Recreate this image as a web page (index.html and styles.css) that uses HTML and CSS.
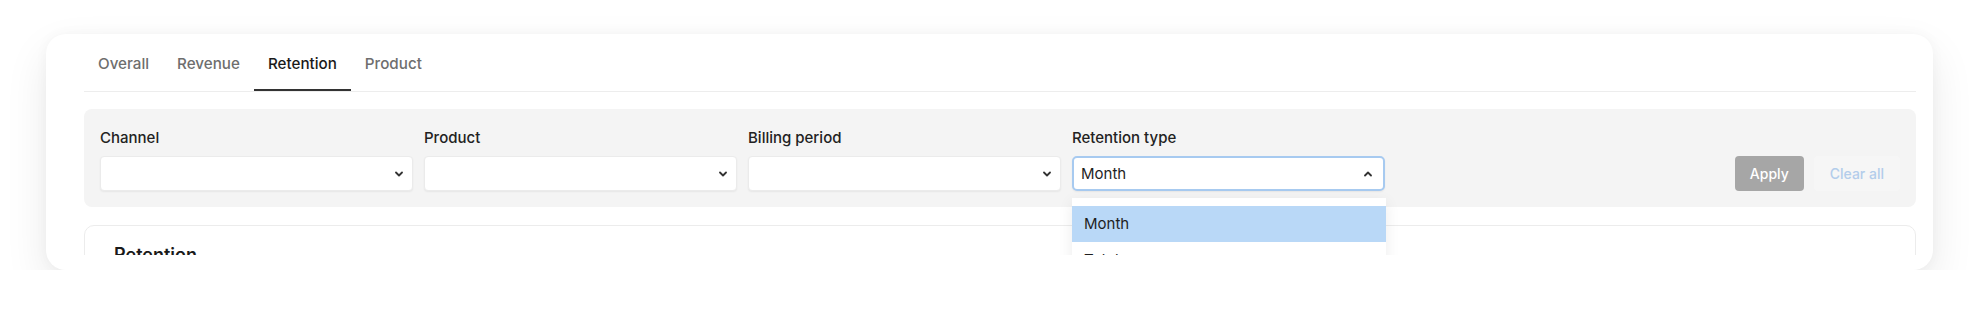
FILE: index.html
```html
<!doctype html>
<html>
    <head>
        <title>Retention</title>
        <meta charset="utf-8">
        <link rel="stylesheet" href="styles.css">
    </head>
    <body>
        <div class="page">
            <div class="card">
                <div class="tabs">
                    <div class="tab">Overall</div>
                    <div class="tab">Revenue</div>
                    <div class="tab active">Retention</div>
                    <div class="tab">Product</div>
                </div>
                <div class="content">
                    <div class="filters">
                        <div class="field">
                            <div class="label">Channel</div>
                            <div class="select">
                                <span></span>
                                <svg class="chev" width="8" height="6" viewBox="0 0 8 6"><path d="M1 1.5 L4 4.5 L7 1.5" fill="none" stroke="#333" stroke-width="1.8" stroke-linecap="round" stroke-linejoin="round"/></svg>
                            </div>
                        </div>
                        <div class="field">
                            <div class="label">Product</div>
                            <div class="select">
                                <span></span>
                                <svg class="chev" width="8" height="6" viewBox="0 0 8 6"><path d="M1 1.5 L4 4.5 L7 1.5" fill="none" stroke="#333" stroke-width="1.8" stroke-linecap="round" stroke-linejoin="round"/></svg>
                            </div>
                        </div>
                        <div class="field">
                            <div class="label">Billing period</div>
                            <div class="select">
                                <span></span>
                                <svg class="chev" width="8" height="6" viewBox="0 0 8 6"><path d="M1 1.5 L4 4.5 L7 1.5" fill="none" stroke="#333" stroke-width="1.8" stroke-linecap="round" stroke-linejoin="round"/></svg>
                            </div>
                        </div>
                        <div class="field">
                            <div class="label">Retention type</div>
                            <div class="select focused">
                                <span>Month</span>
                                <svg class="chev" width="8" height="6" viewBox="0 0 8 6"><path d="M1 4.5 L4 1.5 L7 4.5" fill="none" stroke="#333" stroke-width="1.8" stroke-linecap="round" stroke-linejoin="round"/></svg>
                            </div>
                            <ul class="menu">
                                <li class="selected">Month</li>
                                <li>Total</li>
                            </ul>
                        </div>
                        <div class="actions">
                            <button class="apply" type="button">Apply</button>
                            <button class="clear" type="button">Clear all</button>
                        </div>
                    </div>
                    <div class="section">
                        <h2>Retention</h2>
                    </div>
                </div>
            </div>
        </div>
    </body>
</html>
```

FILE: styles.css
```css
body {
    margin: 0;
    background-color: #ffffff;
    font-family: Inter, "Noto Sans", sans-serif;
    color: #1f1f1f;
}
.page {
    padding: 34px 47px 0 46px;
}
.card {
    height: 236px;
    box-sizing: border-box;
    padding: 8px 17px 15px 38px;
    background-color: #ffffff;
    border-radius: 20px;
    box-shadow: 0 18px 44px rgba(0, 0, 0, 0.085), 0 0 14px rgba(0, 0, 0, 0.035);
}
.tabs {
    display: flex;
    border-bottom: 1px solid #ededed;
}
.tab {
    padding: 12px 14px 15px 14px;
    font-size: 15.2px;
    line-height: 20px;
    font-weight: 500;
    color: #6e6e6e;
    border-bottom: 2px solid transparent;
}
.tab.active {
    color: #1a1a1a;
    border-bottom-color: #333333;
}
.content {
    height: 163px;
    overflow: hidden;
}
.filters {
    margin-top: 17px;
    display: flex;
    align-items: flex-end;
    gap: 11px;
    padding: 19px 16px 16px 16px;
    background-color: #f4f4f4;
    border-radius: 8px;
}
.field {
    position: relative;
    width: 313px;
}
.label {
    font-size: 15px;
    line-height: 20px;
    font-weight: 500;
    color: #222222;
    margin-bottom: 8px;
}
.select {
    height: 35px;
    box-sizing: border-box;
    display: flex;
    align-items: center;
    justify-content: space-between;
    padding: 0 9px 0 9px;
    background-color: #ffffff;
    border: 1px solid #ebebeb;
    border-radius: 4px;
    box-shadow: 0 1px 2px rgba(0, 0, 0, 0.06);
    font-size: 15px;
    color: #1f1f1f;
}
.select.focused {
    border: 2px solid #a7caf0;
    border-radius: 5px;
    padding: 0 11px 0 7px;
}
.menu {
    position: absolute;
    top: 70px;
    left: 0;
    right: -1px;
    margin: 0;
    padding: 8px 0 0 0;
    list-style: none;
    background-color: #ffffff;
    box-shadow: 0 4px 14px rgba(0, 0, 0, 0.08);
}
.menu li {
    height: 36px;
    line-height: 36px;
    padding: 0 12px;
    font-size: 15px;
    color: #1f1f1f;
}
.menu li.selected {
    background-color: #b9d8f7;
}
.actions {
    margin-left: auto;
    display: flex;
    align-items: center;
    gap: 10px;
}
.apply {
    height: 35px;
    padding: 0 15px;
    border: none;
    border-radius: 4px;
    background-color: #a6a6a6;
    color: #ffffff;
    font-family: Inter, "Noto Sans", sans-serif;
    font-size: 14px;
    font-weight: 500;
}
.clear {
    height: 35px;
    padding: 0 16px;
    border: none;
    border-radius: 4px;
    background-color: #f6f6f6;
    color: #b3cdeb;
    font-family: Inter, "Noto Sans", sans-serif;
    font-size: 14px;
    font-weight: 500;
}
.section {
    margin-top: 18px;
    height: 120px;
    padding: 17px 29px;
    border: 1px solid #ececec;
    border-radius: 10px;
}
.section h2 {
    margin: 0;
    font-size: 18px;
    line-height: 24px;
    font-weight: 600;
    color: #1a1a1a;
}
```
